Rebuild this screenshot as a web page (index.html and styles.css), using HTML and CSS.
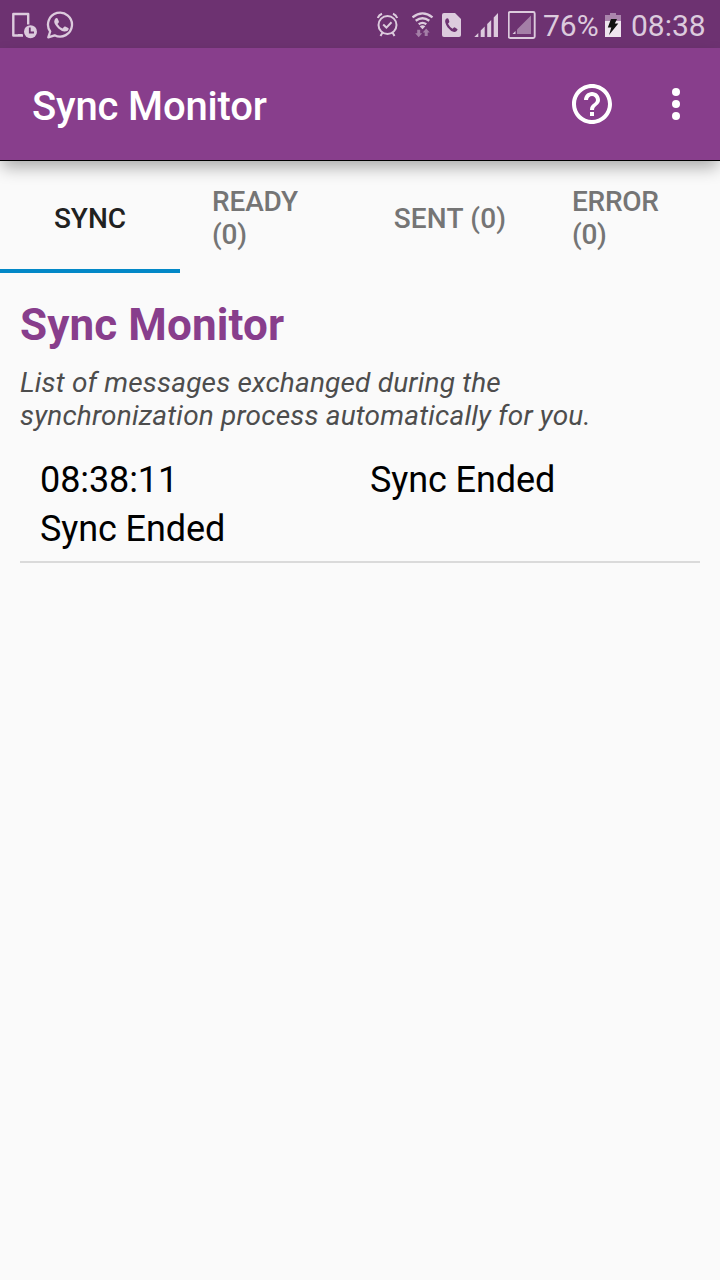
FILE: index.html
```html
<!DOCTYPE html>
<html lang="en">
<head>
<meta charset="utf-8">
<title>Sync Monitor</title>
<link rel="stylesheet" href="styles.css">
</head>
<body>
<div class="status">
  <svg class="phone" width="26" height="48" viewBox="12 0 26 48">
    <path d="M23 35.500H13.300V14H28.200V24.500" fill="none" stroke="currentColor" stroke-width="2.400" stroke-linejoin="round"/>
    <path d="M18 34h4v2h-4z"/>
    <circle cx="30.500" cy="31.700" r="6.500"/>
    <path class="cut" d="M29.800 27.500V32.500H34"/>
  </svg>
  <svg class="whatsapp" width="28" height="48" viewBox="46 0 28 48">
    <path d="M48.300 37.300L50.200 31.500A12 12 0 1 1 54.600 35.300Z" fill="none" stroke="currentColor" stroke-width="2.300" stroke-linejoin="round"/>
    <path d="M55.700 18.300q1.500-.7 2 .4l1.200 2.800q.2.700-.4 1.300l-1 1.200q1.800 3.200 5.100 4.500l1.500-1.800q.5-.5 1.200-.2l2.900 1.400q.7.400.5 1.200-.6 2.600-4.400 2.500-2.600-.3-5.900-3.100-4-3.900-4.200-6.700.1-2.300 1.500-3.500z"/>
  </svg>
  <div class="indicators">
    <svg class="alarm" width="22" height="48" viewBox="377 0 22 48">
      <g fill="none" stroke="currentColor" stroke-width="2">
        <circle cx="387.500" cy="25" r="9"/>
        <path d="M383.200 24.600l3.200 3L391.500 22.300M377.800 18q1-3 4.200-4.300M397.200 18q-1-3-4.200-4.300M382.500 32.500l-2 3.500M392.500 32.500l2 3.500"/>
      </g>
    </svg>
    <svg class="wifi" width="22" height="48" viewBox="412 0 22 48">
      <path d="M412.500 17.300Q422.500 9.500 432.500 17.300M415.700 20.800Q422.500 15.800 429.300 20.800M418.700 24.300Q422.500 21.600 426.300 24.300" fill="none" stroke="currentColor" stroke-width="2.300"/>
      <path d="M419.700 26.200q2.800-2 5.600 0l-2.800 3z"/>
      <path d="M417.200 29.700h3v3.600h2l-3.500 4-3.500-4h2zM424.700 36v-3.500h-2l3.500-4 3.500 4h-2V36z" opacity=".5"/>
    </svg>
    <svg class="call" width="20" height="48" viewBox="442 0 20 48">
      <path d="M444 13h11l6 6v16q0 2-2 2h-15q-2 0-2-2V15q0-2 2-2z"/>
      <path class="handset" d="M446.500 18.400q1.500-.7 2 .5l.8 2.600q.1.700-.5 1.200l-.8 1q1.700 3.400 4.600 5l1.300-1.200q.5-.4 1.100-.1l2.200 1.500q.6.500.2 1.200-1.200 2.200-3.300 2-3.300-.6-6.600-4.800-3-4.700-2.200-7.200.3-1 1.200-1.700z"/>
    </svg>
    <svg class="signal" width="25" height="48" viewBox="474 0 25 48">
      <path d="M474.300 37l4-4v4zM480.700 37v-6.500l4-4V37zM487.200 37V24l4-4v17zM493.700 37V17.400l4.300-4.300V37z"/>
    </svg>
    <svg class="signal-two" width="28" height="48" viewBox="508 0 28 48">
      <rect x="508.700" y="12" width="26" height="26" rx="1.500" fill="none" stroke="currentColor" stroke-width="1.900"/>
      <path d="M517 34v-4.500L531 15.500V34z" opacity=".5"/><path d="M512.500 34l3-3v3z"/>
    </svg>
    <span class="percent">76%</span>
    <svg class="battery" width="16" height="48" viewBox="605 0 16 48">
      <path d="M605 15h5v-2h6v2h5v6h-16z" opacity=".55"/>
      <path class="charge" d="M605 21h16v16h-16z"/>
      <path class="bolt" d="M611 19h6l-2.200 4.500h3.500L609 35l2.300-7.500h-3.500z"/>
    </svg>
    <span class="clock">08:38</span>
  </div>
</div>
<header class="appbar">
  <div class="title">Sync Monitor</div>
  <svg class="help" width="48" height="48" viewBox="0 0 24 24"><path d="M11 18h2v-2h-2v2zm1-16C6.480 2 2 6.480 2 12s4.480 10 10 10 10-4.480 10-10S17.520 2 12 2zm0 18c-4.410 0-8-3.590-8-8s3.590-8 8-8 8 3.590 8 8-3.590 8-8 8zm0-14c-2.210 0-4 1.790-4 4h2c0-1.100.9-2 2-2s2 .9 2 2c0 2-3 1.750-3 5h2c0-2.250 3-2.500 3-5 0-2.210-1.790-4-4-4z"/></svg>
  <svg class="more" width="48" height="48" viewBox="0 0 24 24"><circle cx="12" cy="6" r="2"/><circle cx="12" cy="12" r="2"/><circle cx="12" cy="18" r="2"/></svg>
</header>
<nav class="tabs">
  <div class="tab active">SYNC</div>
  <div class="tab ready">READY (0)</div>
  <div class="tab sent">SENT (0)</div>
  <div class="tab error">ERROR (0)</div>
</nav>
<main class="content">
  <h1 class="heading">Sync Monitor</h1>
  <p class="description">List of messages exchanged during the<br>synchronization process automatically for you.</p>
  <div class="entry">
    <span>08:38:11</span>
    <span>Sync Ended</span>
    <span>Sync Ended</span>
  </div>
</main>
</body>
</html>
```
FILE: styles.css
```css
* { box-sizing: border-box; }
body {
  margin: 0;
  min-height: 1280px;
  background: #fafafa;
  font-family: Roboto, "Noto Sans", sans-serif;
}
svg { display: block; flex: none; fill: currentColor; }
.status {
  display: flex;
  height: 48px;
  padding: 0 14px 0 12px;
  background: #6d3271;
  color: #dccbdd;
}
.whatsapp { margin-left: 8px; }
.cut { fill: none; stroke: #6d3271; stroke-width: 1.800px; }
.handset { fill: #6d3271; }
.indicators {
  display: flex;
  margin-left: auto;
  font-size: 30px;
  line-height: 52px;
  white-space: nowrap;
}
.wifi { margin-left: 13px; }
.call { margin-left: 8px; }
.signal { margin-left: 12px; }
.signal-two { margin-left: 9px; }
.percent { width: 62px; margin-left: 7px; }
.charge { fill: #eee5ee; }
.bolt { fill: #111; }
.clock { width: 75px; margin-left: 10px; }
.appbar {
  position: relative;
  display: flex;
  align-items: center;
  height: 113px;
  padding: 0 20px 1px 32px;
  border-bottom: 1px solid #000;
  background: #883e8c;
  color: #fff;
  box-shadow: 0 8px 16px -2px rgba(0, 0, 0, .33);
}
.title {
  flex: 1;
  padding-top: 6px;
  font-size: 40px;
  line-height: 48px;
  font-weight: 500;
  letter-spacing: -.16px;
}
.more { margin-left: 36px; }
.tabs { display: grid; grid-template-columns: repeat(4, 1fr); height: 112px; }
.tab {
  display: flex;
  align-items: center;
  justify-content: center;
  padding: 8px 32px 2px;
  border-bottom: 4px solid transparent;
  font-size: 28px;
  line-height: 33px;
  font-weight: 500;
  color: #757575;
}
.active { padding-top: 9px; color: #212121; border-color: #0288c7; }
.ready { letter-spacing: -.15px; }
.sent { padding: 9px 24px 2px; letter-spacing: .2px; }
.error { letter-spacing: -.25px; }
.content { padding: 26px 20px 0; }
.heading {
  margin: 0;
  color: #883e8c;
  font-size: 44px;
  line-height: 52px;
  font-weight: 700;
  letter-spacing: .12px;
}
.description {
  margin: 15px 0 0;
  color: #4d4d4d;
  font-size: 28px;
  line-height: 33px;
  font-style: italic;
  letter-spacing: .18px;
}
.entry {
  display: grid;
  grid-template-columns: 330px 1fr;
  row-gap: 7px;
  margin-top: 27px;
  padding: 0 20px 11px;
  border-bottom: 2px solid #dadada;
  font-size: 36px;
  line-height: 42px;
  letter-spacing: -.1px;
  color: #000;
}
```
